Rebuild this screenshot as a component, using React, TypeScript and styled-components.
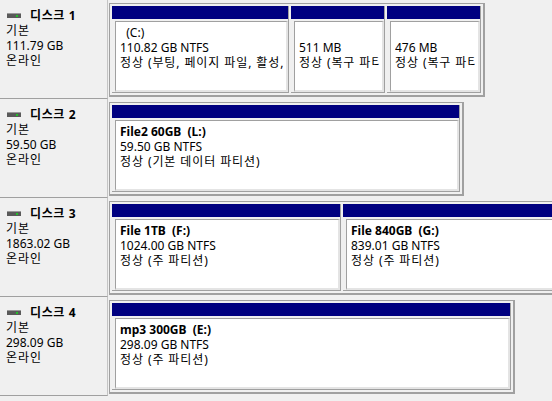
import styled, { createGlobalStyle } from 'styled-components';

interface Part {
  label: string;
  bold?: boolean;
  size: string;
  status: string;
  width: number;
}

interface Disk {
  name: string;
  kind: string;
  size: string;
  state: string;
  parts: Part[];
}

const disks: Disk[] = [
  {
    name: '디스크 1',
    kind: '기본',
    size: '111.79 GB',
    state: '온라인',
    parts: [
      { label: '  (C:)', size: '110.82 GB NTFS', status: '정상 (부팅, 페이지 파일, 활성, 크래시 덤프, 주 파티션)', width: 177 },
      { label: '', size: '511 MB', status: '정상 (복구 파티션)', width: 94 },
      { label: '', size: '476 MB', status: '정상 (복구 파티션)', width: 94 },
    ],
  },
  {
    name: '디스크 2',
    kind: '기본',
    size: '59.50 GB',
    state: '온라인',
    parts: [{ label: 'File2 60GB  (L:)', bold: true, size: '59.50 GB NTFS', status: '정상 (기본 데이터 파티션)', width: 348 }],
  },
  {
    name: '디스크 3',
    kind: '기본',
    size: '1863.02 GB',
    state: '온라인',
    parts: [
      { label: 'File 1TB  (F:)', bold: true, size: '1024.00 GB NTFS', status: '정상 (주 파티션)', width: 229 },
      { label: 'File 840GB  (G:)', bold: true, size: '839.01 GB NTFS', status: '정상 (주 파티션)', width: 250 },
    ],
  },
  {
    name: '디스크 4',
    kind: '기본',
    size: '298.09 GB',
    state: '온라인',
    parts: [{ label: 'mp3 300GB  (E:)', bold: true, size: '298.09 GB NTFS', status: '정상 (주 파티션)', width: 399 }],
  },
];

const GlobalStyle = createGlobalStyle`
  html, body {
    margin: 0;
    padding: 0;
    background: #f0f0f0;
    overflow: hidden;
  }
  body {
    font-family: "Noto Sans", "Noto Sans CJK KR", sans-serif;
    font-size: 12px;
    color: #000;
  }
`;

const Page = styled.div`
  width: 552px;
  height: 401px;
  overflow: hidden;
`;

const Row = styled.div`
  display: flex;
  height: 99px;
`;

const Label = styled.div`
  flex: none;
  width: 101px;
  padding: 8px 0 0 6px;
  border-right: 1px solid #c4c4c4;
  border-bottom: 1px solid #a0a0a0;
  line-height: 15px;
  white-space: nowrap;
`;

const Title = styled.div`
  display: flex;
  align-items: center;
  gap: 9px;
  padding-left: 1px;
  font-weight: 700;
  letter-spacing: 0.6px;
`;

const Info = styled.div<{ $ko?: boolean }>`
  letter-spacing: ${(p) => (p.$ko ? '1px' : '0')};
`;

const Area = styled.div`
  flex: none;
  display: flex;
  padding: 3px 0 2px 1px;
`;

const Volumes = styled.div`
  display: flex;
  gap: 2px;
  padding: 2px;
  border: 1px solid #a0a0a0;
  border-right-width: 2px;
  border-bottom-width: 2px;
  background: #f0f0f0;
`;

const Volume = styled.div<{ $w: number }>`
  flex: none;
  width: ${(p) => p.$w}px;
  display: flex;
  flex-direction: column;
  border-right: 1px solid #a0a0a0;
  border-bottom: 1px solid #a0a0a0;
  box-sizing: border-box;
`;

const Bar = styled.div`
  height: 13px;
  background: #000080;
`;

const Body = styled.div`
  flex: 1;
  min-width: 0;
  margin: 2px 0 0 3px;
  padding: 3px 3px 0 4px;
  background: #fff;
  border-top: 1px solid #a0a0a0;
  border-left: 1px solid #a0a0a0;
  border-right: 2px solid #e4e4e4;
  border-bottom: 2px solid #e4e4e4;
  line-height: 15px;
  overflow: hidden;
  white-space: pre;
`;

const Line = styled.div<{ $bold?: boolean; $ko?: boolean }>`
  height: 15px;
  font-weight: ${(p) => (p.$bold ? 700 : 400)};
  letter-spacing: ${(p) => (p.$ko ? '0.9px' : '0')};
  overflow: hidden;
`;

const DiskIcon = () => (
  <svg width="14" height="5" viewBox="0 0 14 5">
    <rect x="0" y="0" width="14" height="5" fill="#5a5a5a" />
    <rect x="0" y="0" width="14" height="1" fill="#9a9a9a" />
    <rect x="9" y="2" width="2" height="2" fill="#22c02a" />
  </svg>
);

export default function App() {
  return (
    <Page>
      <GlobalStyle />
      {disks.map((d) => (
        <Row key={d.name}>
          <Label>
            <Title>
              <DiskIcon />
              {d.name}
            </Title>
            <Info $ko>{d.kind}</Info>
            <Info>{d.size}</Info>
            <Info $ko>{d.state}</Info>
          </Label>
          <Area>
            <Volumes>
              {d.parts.map((p, i) => (
                <Volume key={i} $w={p.width}>
                  <Bar />
                  <Body>
                    <Line $bold={p.bold}>{p.label || ' '}</Line>
                    <Line>{p.size}</Line>
                    <Line $ko>{p.status}</Line>
                  </Body>
                </Volume>
              ))}
            </Volumes>
          </Area>
        </Row>
      ))}
    </Page>
  );
}
